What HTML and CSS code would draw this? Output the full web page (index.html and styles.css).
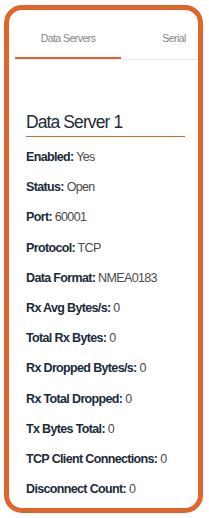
FILE: index.html
```html
<!DOCTYPE html>
<html lang="en">
<head>
    <meta charset="UTF-8">
    <meta name="viewport" content="width=device-width, initial-scale=1.0">
    <title>Data Servers</title>
    <link rel="stylesheet" href="styles.css">
</head>
<body>
    <div class="frame">
        <div class="tabs">
            <div class="tab tab-active">Data Servers</div>
            <div class="tab">Serial</div>
        </div>

        <div class="panel">
            <h2 class="server-title">Data Server 1</h2>

            <p class="row"><b>Enabled:</b> Yes</p>
            <p class="row"><b>Status:</b> Open</p>
            <p class="row"><b>Port:</b> 60001</p>
            <p class="row"><b>Protocol:</b> TCP</p>
            <p class="row"><b>Data Format:</b> NMEA0183</p>
            <p class="row"><b>Rx Avg Bytes/s:</b> 0</p>
            <p class="row"><b>Total Rx Bytes:</b> 0</p>
            <p class="row"><b>Rx Dropped Bytes/s:</b> 0</p>
            <p class="row"><b>Rx Total Dropped:</b> 0</p>
            <p class="row"><b>Tx Bytes Total:</b> 0</p>
            <p class="row"><b>TCP Client Connections:</b> 0</p>
            <p class="row"><b>Disconnect Count:</b> 0</p>
        </div>
    </div>
</body>
</html>
```

FILE: styles.css
```css
body {
    margin: 0;
    background: #fff;
    font-family: "Liberation Sans", Arial, sans-serif;
}

.frame {
    box-sizing: border-box;
    height: 508px;
    margin: 5px 6px 0 4px;
    border: 5px solid #e0652c;
    border-radius: 18px;
    overflow: hidden;
}

.tabs {
    display: flex;
    margin-left: 6px;
    border-bottom: 1px solid #e6e6e6;
    overflow: hidden;
}

.tab {
    flex-shrink: 0;
    width: 106px;
    padding-top: 8px;
    line-height: 41px;
    font-size: 10.5px;
    letter-spacing: -0.55px;
    color: #858585;
    text-align: center;
}

.tab-active {
    box-shadow: inset 0 -2px 0 #e0652c;
}

.panel {
    padding: 0 13px 0 17px;
}

.server-title {
    margin: 51px 0 0;
    padding-bottom: 3px;
    border-bottom: 1px solid #e0652c;
    font-size: 17.5px;
    font-weight: normal;
    line-height: 22px;
    letter-spacing: -0.9px;
    color: #1e2b38;
}

.server-title + .row {
    margin-top: 5px;
}

.row {
    margin: 0;
    font-size: 12.5px;
    line-height: 30.2px;
    letter-spacing: -0.65px;
    white-space: nowrap;
    color: #4a4a4a;
}

.row b {
    color: #1a2a3a;
}
```
